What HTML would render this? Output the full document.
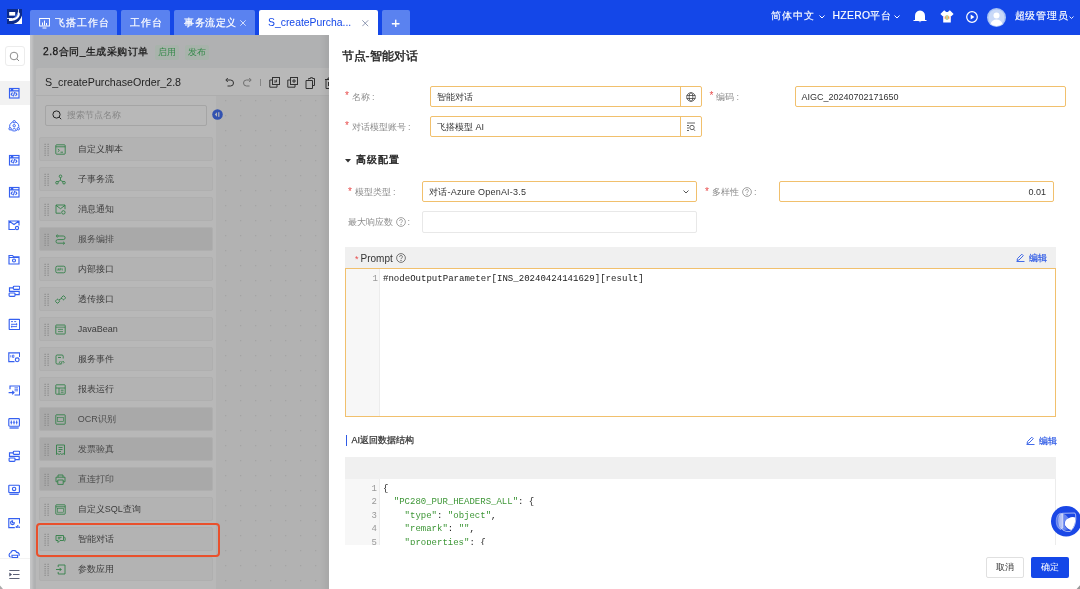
<!DOCTYPE html>
<html><head><meta charset="utf-8">
<style>
*{box-sizing:border-box;margin:0;padding:0}
html,body{width:1080px;height:589px;overflow:hidden;background:#fff;font-family:"Liberation Sans",sans-serif;color:#333}
.abs{position:absolute}
#hdr{will-change:transform;position:absolute;left:0;top:0;width:1080px;height:35px;background:#1447e8}
.tab{position:absolute;top:10px;height:25px;background:#5a82f0;border-radius:2px 2px 0 0;color:#fff;font-size:10.4px;letter-spacing:0.6px;line-height:25px;white-space:nowrap;-webkit-text-stroke:0.2px #fff}
.tab.act{-webkit-text-stroke:0}
.tab.act{background:#fff;color:#1447e8}
.hr-t{position:absolute;top:0;height:35px;line-height:32px;color:#fff;font-size:10.4px;white-space:nowrap;-webkit-text-stroke:0.15px #fff}
#side{will-change:transform;position:absolute;left:0;top:35px;width:30px;height:554px;background:#fff}
#page{will-change:transform;position:absolute;left:30px;top:35px;width:1050px;height:554px;background:#f4f5f7;overflow:hidden}
#mask{position:absolute;left:30px;top:35px;width:1050px;height:554px;background:rgba(0,0,0,0.28)}
#drawer{will-change:transform;position:absolute;left:329px;top:35px;width:751px;height:554px;background:#fff;overflow:hidden}
.lbl{position:absolute;font-size:9px;color:#8c8c8c;white-space:nowrap;line-height:12px}
.lbl b{color:#e84b4b;font-weight:normal;margin-right:3px;font-size:10px;position:relative;top:-0.5px}
.inp{position:absolute;border:1px solid #f1c06d;border-radius:2px;background:#fff;font-size:9px;color:#333;padding-left:6px;padding-top:1px;white-space:nowrap}
.mono{font-family:"Liberation Mono",monospace}
</style></head><body>
<div id="page">
<div class="abs" style="left:13px;top:10px;font-size:10.2px;letter-spacing:0.5px;-webkit-text-stroke:0.25px #222;color:#222;line-height:14px;white-space:nowrap">2.8合同_生成采购订单</div>
<div class="abs" style="left:125px;top:9.5px;width:23.5px;height:15.5px;background:#e9f8ed;border-radius:2px;color:#4cbf6a;font-size:9px;line-height:15.5px;text-align:center">启用</div>
<div class="abs" style="left:155px;top:9.5px;width:23.5px;height:15.5px;background:#e9f8ed;border-radius:2px;color:#4cbf6a;font-size:9px;line-height:15.5px;text-align:center">发布</div>
<div id="card" class="abs" style="left:5.5px;top:33px;width:1100px;height:600px;background:#fff;border-radius:3px">
<div class="abs" style="left:0;top:0;width:1100px;height:27.5px;border-bottom:1px solid #f0f0f0"></div>
<div class="abs" style="left:9.5px;top:7px;font-size:10.7px;color:#333;line-height:14px;white-space:nowrap">S_createPurchaseOrder_2.8</div>
<svg class="abs" style="left:188px;top:9px" width="11" height="10" viewBox="0 0 11 10" fill="none" stroke="#444" stroke-width="1"><path d="M2.5 3H6.5A3 3 0 0 1 6.5 9H3.5M3.8 1L1.8 3L3.8 5"/></svg>
<svg class="abs" style="left:206px;top:9px" width="11" height="10" viewBox="0 0 11 10" fill="none" stroke="#999" stroke-width="1"><path d="M8.5 3H4.5A3 3 0 0 0 4.5 9H7.5M7.2 1L9.2 3L7.2 5"/></svg>
<div class="abs" style="left:224.5px;top:11px;width:1px;height:7px;background:#bbb"></div>
<svg class="abs" style="left:233px;top:9px" width="11" height="11" viewBox="0 0 11 11" fill="none" stroke="#444" stroke-width="1"><rect x="3.5" y="0.5" width="7" height="7"/><path d="M3 3H0.8V10.2H8V8"/><path d="M5.5 3l2 2M7.5 2.5v2.5h-2.5" stroke-width="0.8"/></svg>
<svg class="abs" style="left:251.5px;top:9px" width="11" height="11" viewBox="0 0 11 11" fill="none" stroke="#444" stroke-width="1"><rect x="3.5" y="0.5" width="7" height="7"/><path d="M3 3H0.8V10.2H8V8M7 2v4M5 4h4"/></svg>
<svg class="abs" style="left:269.5px;top:8.5px" width="11" height="12" viewBox="0 0 11 12" fill="none" stroke="#444" stroke-width="1"><path d="M3.5 2.5V1.5h2V0.7h2v0.8h2v7h-2"/><path d="M1 3.5h6.5v8H1z"/></svg>
<svg class="abs" style="left:288.5px;top:8.5px" width="11" height="12" viewBox="0 0 11 12" fill="none" stroke="#444" stroke-width="1"><path d="M1 2.5h9M4 2.5V1h3v1.5M2 2.5v9h7v-9M4.5 5v4M6.5 5v4"/></svg>
<div class="abs" style="left:0;top:27.5px;width:181px;height:600px;background:#fff;border-right:1px solid #f7f7f7"></div>
<div class="abs" style="left:181px;top:27.5px;width:919px;height:600px;background:#f7f7f7;background-image:radial-gradient(circle,#d8d8d8 0.8px,transparent 1px);background-size:15px 15px;background-position:1.2px -2.8px"></div>
<div class="abs" style="left:9.7px;top:37px;width:162px;height:21px;border:1px solid #e5e5e5;border-radius:2px;background:#fff"></div>
<svg class="abs" style="left:16px;top:42px" width="10" height="10" viewBox="0 0 10 10" fill="none" stroke="#333" stroke-width="1"><circle cx="4.5" cy="4.5" r="3.6"/><path d="M7.2 7.2L9.2 9.2"/></svg>
<div class="abs" style="left:31px;top:41px;font-size:9px;color:#bbb;line-height:13px;white-space:nowrap">搜索节点名称</div>
<svg class="abs" style="left:176px;top:40.5px" width="11" height="11" viewBox="0 0 11 11"><circle cx="5.5" cy="5.5" r="5.3" fill="#4672f5"/><path d="M5 3.2L2.8 5.5L5 7.8Z" fill="#fff"/><rect x="6.2" y="3.2" width="1.2" height="4.6" fill="#fff"/></svg>
<div class="abs" style="left:3.7px;top:69.1px;width:173.5px;height:23.5px;background:#f8f8f8;border:1px solid #f3f3f3;border-radius:2px"><svg class="abs" style="left:4px;top:5px" width="5" height="13" viewBox="0 0 5 13" fill="#a8a8a8"><rect x="0.6" y="0.8" width="1" height="1"/><rect x="3.6" y="0.8" width="1" height="1"/><rect x="0.6" y="3" width="1" height="1"/><rect x="3.6" y="3" width="1" height="1"/><rect x="0.6" y="5.2" width="1" height="1"/><rect x="3.6" y="5.2" width="1" height="1"/><rect x="0.6" y="7.4" width="1" height="1"/><rect x="3.6" y="7.4" width="1" height="1"/><rect x="0.6" y="9.6" width="1" height="1"/><rect x="3.6" y="9.6" width="1" height="1"/><rect x="0.6" y="11.8" width="1" height="1"/><rect x="3.6" y="11.8" width="1" height="1"/></svg><svg class="abs" style="left:15px;top:5.5px" width="11" height="11" viewBox="0 0 11 11" fill="none" stroke="#3cae5c" stroke-width="0.85"><rect x="0.8" y="0.8" width="9.4" height="9.4" rx="0.8"/><path d="M0.8 2.8h9.4M2.8 5l1.6 1.4L2.8 7.8M5.5 8.2h2.5"/></svg><div class="abs" style="left:37.5px;top:5px;font-size:9px;color:#555;line-height:13px;white-space:nowrap">自定义脚本</div></div>
<div class="abs" style="left:3.7px;top:99.1px;width:173.5px;height:23.5px;background:#f8f8f8;border:1px solid #f3f3f3;border-radius:2px"><svg class="abs" style="left:4px;top:5px" width="5" height="13" viewBox="0 0 5 13" fill="#a8a8a8"><rect x="0.6" y="0.8" width="1" height="1"/><rect x="3.6" y="0.8" width="1" height="1"/><rect x="0.6" y="3" width="1" height="1"/><rect x="3.6" y="3" width="1" height="1"/><rect x="0.6" y="5.2" width="1" height="1"/><rect x="3.6" y="5.2" width="1" height="1"/><rect x="0.6" y="7.4" width="1" height="1"/><rect x="3.6" y="7.4" width="1" height="1"/><rect x="0.6" y="9.6" width="1" height="1"/><rect x="3.6" y="9.6" width="1" height="1"/><rect x="0.6" y="11.8" width="1" height="1"/><rect x="3.6" y="11.8" width="1" height="1"/></svg><svg class="abs" style="left:15px;top:5.5px" width="11" height="11" viewBox="0 0 11 11" fill="none" stroke="#3cae5c" stroke-width="0.85"><circle cx="5.5" cy="2.3" r="1.3"/><circle cx="2" cy="8.7" r="1.3"/><circle cx="9" cy="8.7" r="1.3"/><path d="M5.5 3.6v2.8L2.9 7.7M5.5 6.4L8.1 7.7"/></svg><div class="abs" style="left:37.5px;top:5px;font-size:9px;color:#555;line-height:13px;white-space:nowrap">子事务流</div></div>
<div class="abs" style="left:3.7px;top:129.1px;width:173.5px;height:23.5px;background:#f8f8f8;border:1px solid #f3f3f3;border-radius:2px"><svg class="abs" style="left:4px;top:5px" width="5" height="13" viewBox="0 0 5 13" fill="#a8a8a8"><rect x="0.6" y="0.8" width="1" height="1"/><rect x="3.6" y="0.8" width="1" height="1"/><rect x="0.6" y="3" width="1" height="1"/><rect x="3.6" y="3" width="1" height="1"/><rect x="0.6" y="5.2" width="1" height="1"/><rect x="3.6" y="5.2" width="1" height="1"/><rect x="0.6" y="7.4" width="1" height="1"/><rect x="3.6" y="7.4" width="1" height="1"/><rect x="0.6" y="9.6" width="1" height="1"/><rect x="3.6" y="9.6" width="1" height="1"/><rect x="0.6" y="11.8" width="1" height="1"/><rect x="3.6" y="11.8" width="1" height="1"/></svg><svg class="abs" style="left:15px;top:5.5px" width="11" height="11" viewBox="0 0 11 11" fill="none" stroke="#3cae5c" stroke-width="0.85"><path d="M10 5.2V1H1v8.2h4.8M1 1.4l4.5 3.3L10 1.4"/><circle cx="8.4" cy="8.4" r="1.7"/></svg><div class="abs" style="left:37.5px;top:5px;font-size:9px;color:#555;line-height:13px;white-space:nowrap">消息通知</div></div>
<div class="abs" style="left:3.7px;top:159.1px;width:173.5px;height:23.5px;background:#ebebeb;border:1px solid #f3f3f3;border-radius:2px"><svg class="abs" style="left:4px;top:5px" width="5" height="13" viewBox="0 0 5 13" fill="#a8a8a8"><rect x="0.6" y="0.8" width="1" height="1"/><rect x="3.6" y="0.8" width="1" height="1"/><rect x="0.6" y="3" width="1" height="1"/><rect x="3.6" y="3" width="1" height="1"/><rect x="0.6" y="5.2" width="1" height="1"/><rect x="3.6" y="5.2" width="1" height="1"/><rect x="0.6" y="7.4" width="1" height="1"/><rect x="3.6" y="7.4" width="1" height="1"/><rect x="0.6" y="9.6" width="1" height="1"/><rect x="3.6" y="9.6" width="1" height="1"/><rect x="0.6" y="11.8" width="1" height="1"/><rect x="3.6" y="11.8" width="1" height="1"/></svg><svg class="abs" style="left:15px;top:5.5px" width="11" height="11" viewBox="0 0 11 11" fill="none" stroke="#3cae5c" stroke-width="0.85"><circle cx="2.3" cy="2" r="1"/><path d="M3.4 2H8.3A1.8 1.8 0 0 1 8.3 5.6H2.8A1.8 1.8 0 0 0 2.8 9.2H9.6M8.2 7.9L9.6 9.2L8.2 10.5"/></svg><div class="abs" style="left:37.5px;top:5px;font-size:9px;color:#6a6a6a;line-height:13px;white-space:nowrap">服务编排</div></div>
<div class="abs" style="left:3.7px;top:189.1px;width:173.5px;height:23.5px;background:#f8f8f8;border:1px solid #f3f3f3;border-radius:2px"><svg class="abs" style="left:4px;top:5px" width="5" height="13" viewBox="0 0 5 13" fill="#a8a8a8"><rect x="0.6" y="0.8" width="1" height="1"/><rect x="3.6" y="0.8" width="1" height="1"/><rect x="0.6" y="3" width="1" height="1"/><rect x="3.6" y="3" width="1" height="1"/><rect x="0.6" y="5.2" width="1" height="1"/><rect x="3.6" y="5.2" width="1" height="1"/><rect x="0.6" y="7.4" width="1" height="1"/><rect x="3.6" y="7.4" width="1" height="1"/><rect x="0.6" y="9.6" width="1" height="1"/><rect x="3.6" y="9.6" width="1" height="1"/><rect x="0.6" y="11.8" width="1" height="1"/><rect x="3.6" y="11.8" width="1" height="1"/></svg><svg class="abs" style="left:15px;top:5.5px" width="11" height="11" viewBox="0 0 11 11" fill="none" stroke="#3cae5c" stroke-width="0.85"><rect x="0.8" y="2.2" width="9.4" height="6.6" rx="1.5"/><path d="M2.6 6.6L3.3 4.4L4 6.6M2.9 5.8h0.8M4.8 6.6V4.4h0.9a0.6 0.6 0 0 1 0 1.2H4.8M7.3 4.4v2.2" stroke-width="0.6"/></svg><div class="abs" style="left:37.5px;top:5px;font-size:9px;color:#555;line-height:13px;white-space:nowrap">内部接口</div></div>
<div class="abs" style="left:3.7px;top:219.1px;width:173.5px;height:23.5px;background:#f8f8f8;border:1px solid #f3f3f3;border-radius:2px"><svg class="abs" style="left:4px;top:5px" width="5" height="13" viewBox="0 0 5 13" fill="#a8a8a8"><rect x="0.6" y="0.8" width="1" height="1"/><rect x="3.6" y="0.8" width="1" height="1"/><rect x="0.6" y="3" width="1" height="1"/><rect x="3.6" y="3" width="1" height="1"/><rect x="0.6" y="5.2" width="1" height="1"/><rect x="3.6" y="5.2" width="1" height="1"/><rect x="0.6" y="7.4" width="1" height="1"/><rect x="3.6" y="7.4" width="1" height="1"/><rect x="0.6" y="9.6" width="1" height="1"/><rect x="3.6" y="9.6" width="1" height="1"/><rect x="0.6" y="11.8" width="1" height="1"/><rect x="3.6" y="11.8" width="1" height="1"/></svg><svg class="abs" style="left:15px;top:5.5px" width="11" height="11" viewBox="0 0 11 11" fill="none" stroke="#3cae5c" stroke-width="0.85"><rect x="0.9" y="5.6" width="3.2" height="3.2" rx="0.6" transform="rotate(-45 2.5 7.2)"/><rect x="6.9" y="2.2" width="3.2" height="3.2" rx="0.6" transform="rotate(-45 8.5 3.8)"/><path d="M4 5.9L7 4.1"/></svg><div class="abs" style="left:37.5px;top:5px;font-size:9px;color:#555;line-height:13px;white-space:nowrap">透传接口</div></div>
<div class="abs" style="left:3.7px;top:249.1px;width:173.5px;height:23.5px;background:#f8f8f8;border:1px solid #f3f3f3;border-radius:2px"><svg class="abs" style="left:4px;top:5px" width="5" height="13" viewBox="0 0 5 13" fill="#a8a8a8"><rect x="0.6" y="0.8" width="1" height="1"/><rect x="3.6" y="0.8" width="1" height="1"/><rect x="0.6" y="3" width="1" height="1"/><rect x="3.6" y="3" width="1" height="1"/><rect x="0.6" y="5.2" width="1" height="1"/><rect x="3.6" y="5.2" width="1" height="1"/><rect x="0.6" y="7.4" width="1" height="1"/><rect x="3.6" y="7.4" width="1" height="1"/><rect x="0.6" y="9.6" width="1" height="1"/><rect x="3.6" y="9.6" width="1" height="1"/><rect x="0.6" y="11.8" width="1" height="1"/><rect x="3.6" y="11.8" width="1" height="1"/></svg><svg class="abs" style="left:15px;top:5.5px" width="11" height="11" viewBox="0 0 11 11" fill="none" stroke="#3cae5c" stroke-width="0.85"><rect x="0.8" y="1" width="9.4" height="9" rx="0.6"/><path d="M0.8 3.2h9.4M3 5.4h5M3 7.6h5" stroke-width="0.7"/></svg><div class="abs" style="left:37.5px;top:5px;font-size:9px;color:#555;line-height:13px;white-space:nowrap">JavaBean</div></div>
<div class="abs" style="left:3.7px;top:279.1px;width:173.5px;height:23.5px;background:#f8f8f8;border:1px solid #f3f3f3;border-radius:2px"><svg class="abs" style="left:4px;top:5px" width="5" height="13" viewBox="0 0 5 13" fill="#a8a8a8"><rect x="0.6" y="0.8" width="1" height="1"/><rect x="3.6" y="0.8" width="1" height="1"/><rect x="0.6" y="3" width="1" height="1"/><rect x="3.6" y="3" width="1" height="1"/><rect x="0.6" y="5.2" width="1" height="1"/><rect x="3.6" y="5.2" width="1" height="1"/><rect x="0.6" y="7.4" width="1" height="1"/><rect x="3.6" y="7.4" width="1" height="1"/><rect x="0.6" y="9.6" width="1" height="1"/><rect x="3.6" y="9.6" width="1" height="1"/><rect x="0.6" y="11.8" width="1" height="1"/><rect x="3.6" y="11.8" width="1" height="1"/></svg><svg class="abs" style="left:15px;top:5.5px" width="11" height="11" viewBox="0 0 11 11" fill="none" stroke="#3cae5c" stroke-width="0.85"><path d="M6.5 10H2.2A1.2 1.2 0 0 1 1 8.8V2.2A1.2 1.2 0 0 1 2.2 1H7A1.2 1.2 0 0 1 8.2 2.2V4.5"/><path d="M5.3 7.2L4.4 8.3L5.3 9.4M8.2 7.2L9.1 8.3L8.2 9.4M7.2 7L6.4 9.6M3 3.5h3"/></svg><div class="abs" style="left:37.5px;top:5px;font-size:9px;color:#555;line-height:13px;white-space:nowrap">服务事件</div></div>
<div class="abs" style="left:3.7px;top:309.1px;width:173.5px;height:23.5px;background:#f8f8f8;border:1px solid #f3f3f3;border-radius:2px"><svg class="abs" style="left:4px;top:5px" width="5" height="13" viewBox="0 0 5 13" fill="#a8a8a8"><rect x="0.6" y="0.8" width="1" height="1"/><rect x="3.6" y="0.8" width="1" height="1"/><rect x="0.6" y="3" width="1" height="1"/><rect x="3.6" y="3" width="1" height="1"/><rect x="0.6" y="5.2" width="1" height="1"/><rect x="3.6" y="5.2" width="1" height="1"/><rect x="0.6" y="7.4" width="1" height="1"/><rect x="3.6" y="7.4" width="1" height="1"/><rect x="0.6" y="9.6" width="1" height="1"/><rect x="3.6" y="9.6" width="1" height="1"/><rect x="0.6" y="11.8" width="1" height="1"/><rect x="3.6" y="11.8" width="1" height="1"/></svg><svg class="abs" style="left:15px;top:5.5px" width="11" height="11" viewBox="0 0 11 11" fill="none" stroke="#3cae5c" stroke-width="0.85"><rect x="0.8" y="0.8" width="9.4" height="9.4" rx="0.6"/><path d="M0.8 4h9.4M4 4v6.2M5.8 6.2h2.8M5.8 8.2h2.8"/></svg><div class="abs" style="left:37.5px;top:5px;font-size:9px;color:#555;line-height:13px;white-space:nowrap">报表运行</div></div>
<div class="abs" style="left:3.7px;top:339.1px;width:173.5px;height:23.5px;background:#ebebeb;border:1px solid #f3f3f3;border-radius:2px"><svg class="abs" style="left:4px;top:5px" width="5" height="13" viewBox="0 0 5 13" fill="#a8a8a8"><rect x="0.6" y="0.8" width="1" height="1"/><rect x="3.6" y="0.8" width="1" height="1"/><rect x="0.6" y="3" width="1" height="1"/><rect x="3.6" y="3" width="1" height="1"/><rect x="0.6" y="5.2" width="1" height="1"/><rect x="3.6" y="5.2" width="1" height="1"/><rect x="0.6" y="7.4" width="1" height="1"/><rect x="3.6" y="7.4" width="1" height="1"/><rect x="0.6" y="9.6" width="1" height="1"/><rect x="3.6" y="9.6" width="1" height="1"/><rect x="0.6" y="11.8" width="1" height="1"/><rect x="3.6" y="11.8" width="1" height="1"/></svg><svg class="abs" style="left:15px;top:5.5px" width="11" height="11" viewBox="0 0 11 11" fill="none" stroke="#3cae5c" stroke-width="0.85"><rect x="0.8" y="0.8" width="9.4" height="9.4" rx="0.6"/><rect x="2.5" y="3.5" width="6" height="4" stroke-width="0.6"/></svg><div class="abs" style="left:37.5px;top:5px;font-size:9px;color:#6a6a6a;line-height:13px;white-space:nowrap">OCR识别</div></div>
<div class="abs" style="left:3.7px;top:369.1px;width:173.5px;height:23.5px;background:#ebebeb;border:1px solid #f3f3f3;border-radius:2px"><svg class="abs" style="left:4px;top:5px" width="5" height="13" viewBox="0 0 5 13" fill="#a8a8a8"><rect x="0.6" y="0.8" width="1" height="1"/><rect x="3.6" y="0.8" width="1" height="1"/><rect x="0.6" y="3" width="1" height="1"/><rect x="3.6" y="3" width="1" height="1"/><rect x="0.6" y="5.2" width="1" height="1"/><rect x="3.6" y="5.2" width="1" height="1"/><rect x="0.6" y="7.4" width="1" height="1"/><rect x="3.6" y="7.4" width="1" height="1"/><rect x="0.6" y="9.6" width="1" height="1"/><rect x="3.6" y="9.6" width="1" height="1"/><rect x="0.6" y="11.8" width="1" height="1"/><rect x="3.6" y="11.8" width="1" height="1"/></svg><svg class="abs" style="left:15px;top:5.5px" width="11" height="11" viewBox="0 0 11 11" fill="none" stroke="#3cae5c" stroke-width="0.85"><path d="M1.5 1h8v9.5L8.2 9.6L6.9 10.5L5.5 9.6L4.1 10.5L2.8 9.6L1.5 10.5Z"/><path d="M3.5 3.5h4M3.5 5.5h4M3.5 7.5h2.5"/></svg><div class="abs" style="left:37.5px;top:5px;font-size:9px;color:#6a6a6a;line-height:13px;white-space:nowrap">发票验真</div></div>
<div class="abs" style="left:3.7px;top:399.1px;width:173.5px;height:23.5px;background:#ebebeb;border:1px solid #f3f3f3;border-radius:2px"><svg class="abs" style="left:4px;top:5px" width="5" height="13" viewBox="0 0 5 13" fill="#a8a8a8"><rect x="0.6" y="0.8" width="1" height="1"/><rect x="3.6" y="0.8" width="1" height="1"/><rect x="0.6" y="3" width="1" height="1"/><rect x="3.6" y="3" width="1" height="1"/><rect x="0.6" y="5.2" width="1" height="1"/><rect x="3.6" y="5.2" width="1" height="1"/><rect x="0.6" y="7.4" width="1" height="1"/><rect x="3.6" y="7.4" width="1" height="1"/><rect x="0.6" y="9.6" width="1" height="1"/><rect x="3.6" y="9.6" width="1" height="1"/><rect x="0.6" y="11.8" width="1" height="1"/><rect x="3.6" y="11.8" width="1" height="1"/></svg><svg class="abs" style="left:15px;top:5.5px" width="11" height="11" viewBox="0 0 11 11" fill="none" stroke="#3cae5c" stroke-width="0.85"><path d="M3 3.2V1h5v2.2M1 3.2h9v4.6H8.2M2.8 7.8H1V3.2M2.8 6h5.4v4.4H2.8z"/></svg><div class="abs" style="left:37.5px;top:5px;font-size:9px;color:#6a6a6a;line-height:13px;white-space:nowrap">直连打印</div></div>
<div class="abs" style="left:3.7px;top:429.1px;width:173.5px;height:23.5px;background:#f8f8f8;border:1px solid #f3f3f3;border-radius:2px"><svg class="abs" style="left:4px;top:5px" width="5" height="13" viewBox="0 0 5 13" fill="#a8a8a8"><rect x="0.6" y="0.8" width="1" height="1"/><rect x="3.6" y="0.8" width="1" height="1"/><rect x="0.6" y="3" width="1" height="1"/><rect x="3.6" y="3" width="1" height="1"/><rect x="0.6" y="5.2" width="1" height="1"/><rect x="3.6" y="5.2" width="1" height="1"/><rect x="0.6" y="7.4" width="1" height="1"/><rect x="3.6" y="7.4" width="1" height="1"/><rect x="0.6" y="9.6" width="1" height="1"/><rect x="3.6" y="9.6" width="1" height="1"/><rect x="0.6" y="11.8" width="1" height="1"/><rect x="3.6" y="11.8" width="1" height="1"/></svg><svg class="abs" style="left:15px;top:5.5px" width="11" height="11" viewBox="0 0 11 11" fill="none" stroke="#3cae5c" stroke-width="0.85"><rect x="0.8" y="0.8" width="9.4" height="9.4" rx="0.6"/><path d="M0.8 2.8h9.4"/><rect x="2.4" y="4.6" width="6.2" height="3.6" stroke-width="0.6"/></svg><div class="abs" style="left:37.5px;top:5px;font-size:9px;color:#555;line-height:13px;white-space:nowrap">自定义SQL查询</div></div>
<div class="abs" style="left:3.7px;top:459.1px;width:173.5px;height:23.5px;background:#f8f8f8;border:1px solid #f3f3f3;border-radius:2px"><svg class="abs" style="left:4px;top:5px" width="5" height="13" viewBox="0 0 5 13" fill="#a8a8a8"><rect x="0.6" y="0.8" width="1" height="1"/><rect x="3.6" y="0.8" width="1" height="1"/><rect x="0.6" y="3" width="1" height="1"/><rect x="3.6" y="3" width="1" height="1"/><rect x="0.6" y="5.2" width="1" height="1"/><rect x="3.6" y="5.2" width="1" height="1"/><rect x="0.6" y="7.4" width="1" height="1"/><rect x="3.6" y="7.4" width="1" height="1"/><rect x="0.6" y="9.6" width="1" height="1"/><rect x="3.6" y="9.6" width="1" height="1"/><rect x="0.6" y="11.8" width="1" height="1"/><rect x="3.6" y="11.8" width="1" height="1"/></svg><svg class="abs" style="left:15px;top:5.5px" width="11" height="11" viewBox="0 0 11 11" fill="none" stroke="#3cae5c" stroke-width="0.85"><path d="M1 1.5h7.5v5H5L3 8.5V6.5H1zM2.8 3.3h3.8M2.8 4.8h2.5M9.6 2.8q1.4 2.2 0 4.6"/></svg><div class="abs" style="left:37.5px;top:5px;font-size:9px;color:#555;line-height:13px;white-space:nowrap">智能对话</div></div>
<div class="abs" style="left:3.7px;top:489.1px;width:173.5px;height:23.5px;background:#f8f8f8;border:1px solid #f3f3f3;border-radius:2px"><svg class="abs" style="left:4px;top:5px" width="5" height="13" viewBox="0 0 5 13" fill="#a8a8a8"><rect x="0.6" y="0.8" width="1" height="1"/><rect x="3.6" y="0.8" width="1" height="1"/><rect x="0.6" y="3" width="1" height="1"/><rect x="3.6" y="3" width="1" height="1"/><rect x="0.6" y="5.2" width="1" height="1"/><rect x="3.6" y="5.2" width="1" height="1"/><rect x="0.6" y="7.4" width="1" height="1"/><rect x="3.6" y="7.4" width="1" height="1"/><rect x="0.6" y="9.6" width="1" height="1"/><rect x="3.6" y="9.6" width="1" height="1"/><rect x="0.6" y="11.8" width="1" height="1"/><rect x="3.6" y="11.8" width="1" height="1"/></svg><svg class="abs" style="left:15px;top:5.5px" width="11" height="11" viewBox="0 0 11 11" fill="none" stroke="#3cae5c" stroke-width="0.85"><path d="M3.2 3V1h6.8v9H3.2V8M1 5.5h5.2M4.6 3.9L6.2 5.5L4.6 7.1"/></svg><div class="abs" style="left:37.5px;top:5px;font-size:9px;color:#555;line-height:13px;white-space:nowrap">参数应用</div></div>
</div>
</div>
<div id="mask"></div>
<div class="abs" style="left:30px;top:35px;width:4px;height:554px;background:linear-gradient(90deg,rgba(255,255,255,0.28),rgba(255,255,255,0.2) 50%,rgba(255,255,255,0))"></div>
<div class="abs" style="left:35.5px;top:523px;width:184.5px;height:33.5px;border:2px solid #e9502c;border-radius:4px"></div>
<div class="abs" style="left:320px;top:35px;width:9px;height:554px;background:linear-gradient(90deg,rgba(0,0,0,0),rgba(0,0,0,0.06))"></div>
<div id="hdr">
<svg class="abs" style="left:7px;top:9px" width="15" height="15" viewBox="0 0 15 15">
<rect width="15" height="15" fill="#0b2a8a"/>
<path d="M15 6.5 L15 15 L6.5 15 Q13 13 15 6.5Z" fill="#fff"/>
<path d="M11 0.3 L11.8 0.3 L11.8 3.2 Q13.2 4 12.8 6 Q11.5 11.2 4.5 12 L2 12 L2 9.2 L5.5 9.2 Q9.6 8.6 10.4 5 L10.6 3.5 L11 3.2Z" fill="#fff"/>
<rect x="2.2" y="3" width="6" height="3.6" fill="#fff"/>
<rect x="0" y="9.1" width="5" height="0.8" fill="#fff"/>
<path d="M10.6 4.2 Q11 7.2 7.6 9 Q7.8 6 10.6 4.2Z" fill="#3d6ff0"/>
</svg>
<div class="tab" style="left:30px;width:87px">
<svg class="abs" style="left:9px;top:8px" width="11" height="11" viewBox="0 0 11 11" fill="none" stroke="#fff" stroke-width="1"><rect x="0.6" y="0.5" width="10" height="7.5"/><path d="M3.5 7.5V4.5M5.5 7.5V2.5M7.5 7.5V5M3.5 10h4"/></svg>
<span class="abs" style="left:25px;letter-spacing:1px">飞搭工作台</span></div>
<div class="tab" style="left:121px;width:49px"><span class="abs" style="left:9px;letter-spacing:1px">工作台</span></div>
<div class="tab" style="left:174px;width:81px"><span class="abs" style="left:10px">事务流定义</span><svg class="abs" style="left:66px;top:9.6px" width="6" height="6" viewBox="0 0 6 6" stroke="#fff" stroke-opacity="0.9" stroke-width="0.8"><path d="M0.3 0.3L5.7 5.7M5.7 0.3L0.3 5.7"/></svg></div>
<div class="tab act" style="left:259px;width:119px"><span class="abs" style="left:9px;letter-spacing:0">S_createPurcha...</span><svg class="abs" style="left:103px;top:10px" width="6.5" height="6.5" viewBox="0 0 6.5 6.5" stroke="#6b7899" stroke-width="0.75"><path d="M0.3 0.3L6.2 6.2M6.2 0.3L0.3 6.2"/></svg></div>
<div class="tab" style="left:382px;width:28px;text-align:center;font-size:15px">+</div>
<div class="hr-t" style="left:771px;letter-spacing:0.85px">简体中文</div>
<svg class="abs" style="left:819px;top:15px" width="6" height="4" viewBox="0 0 6 4" fill="none" stroke="#fff" stroke-width="1"><path d="M0.5 0.5L3 3L5.5 0.5"/></svg>
<div class="hr-t" style="left:832.5px;letter-spacing:0.3px">HZERO平台</div>
<svg class="abs" style="left:894px;top:15px" width="6" height="4" viewBox="0 0 6 4" fill="none" stroke="#fff" stroke-width="1"><path d="M0.5 0.5L3 3L5.5 0.5"/></svg>
<svg class="abs" style="left:913px;top:9px" width="14" height="14" viewBox="0 0 14 14"><path d="M2 11 L2 7 Q2 2 7 1.5 Q12 2 12 7 L12 11 L13.5 11 L13.5 12 L0.5 12 L0.5 11 Z" fill="#fff"/><path d="M5.5 12.5 Q7 14 8.5 12.5Z" fill="#fff"/></svg>
<svg class="abs" style="left:940px;top:10px" width="14" height="13" viewBox="0 0 14 13"><path d="M4.2 0.3L5.6 1.4Q7 2.4 8.4 1.4L9.8 0.3L13.6 4L11.3 6.2L10.8 5.9V12.6H3.2V5.9L2.7 6.2L0.4 4Z" fill="#fff"/><rect x="3.2" y="6.6" width="7.6" height="2.2" fill="#fbd3d3"/><ellipse cx="7" cy="7.6" rx="2" ry="2.3" fill="#f2b04a"/><rect x="6.3" y="5.3" width="1.4" height="4.6" fill="#a8e0c8"/></svg>
<svg class="abs" style="left:966px;top:11px" width="12" height="12" viewBox="0 0 12 12" fill="none"><circle cx="6" cy="6" r="5.3" stroke="#fff" stroke-width="1.2"/><path d="M4.7 3.6 L8.4 6 L4.7 8.4Z" fill="#fff"/></svg>
<svg class="abs" style="left:987px;top:8px" width="19" height="19" viewBox="0 0 19 19"><circle cx="9.5" cy="9.5" r="9.5" fill="#a9c3f5"/><circle cx="9.5" cy="9.5" r="8" fill="#c9d9f8"/><circle cx="9.5" cy="7.5" r="3" fill="#fff"/><path d="M3.5 16 Q5 11.5 9.5 11.5 Q14 11.5 15.5 16 Q12.5 18 9.5 18 Q6.5 18 3.5 16Z" fill="#fff"/></svg>
<div class="hr-t" style="left:1014.5px;letter-spacing:0.75px">超级管理员</div>
<svg class="abs" style="left:1069px;top:16px" width="5" height="3" viewBox="0 0 5 3" fill="none" stroke="#fff" stroke-width="0.9"><path d="M0.5 0.5L2.5 2.5L4.5 0.5"/></svg>
</div>
<div id="side">
<div class="abs" style="left:4.5px;top:11px;width:20px;height:20px;border:1px solid #ececec;border-radius:3px"></div>
<svg class="abs" style="left:9px;top:15.5px" width="11" height="11" viewBox="0 0 11 11" fill="none" stroke="#8c8c8c" stroke-width="1"><circle cx="5" cy="5" r="3.8"/><path d="M7.8 7.8L10 10"/></svg>
<div class="abs" style="left:0;top:46px;width:30px;height:24px;background:#f2f2f2"></div>
<svg class="abs" style="left:8px;top:52.0px" width="12" height="12" viewBox="0 0 12 12" fill="none" stroke="#3560f0" stroke-width="1.15"><rect x="1.5" y="1.5" width="9.5" height="9.5"/><path d="M1.5 3.8h9.5M2.8 2.6h2.5M4.5 5.5L3.2 7.3L4.5 9M7.5 5.5L8.8 7.3L7.5 9M6.6 5.2L5.4 9.4"/></svg>
<svg class="abs" style="left:8px;top:85.0px" width="12" height="12" viewBox="0 0 12 12" fill="none" stroke="#3560f0" stroke-width="1.15"><circle cx="6.2" cy="6.4" r="4.6" stroke-width="0.95"/><circle cx="6.2" cy="1.7" r="1.2" fill="#fff" stroke-width="0.95"/><circle cx="2.1" cy="8.8" r="1.2" fill="#fff" stroke-width="0.95"/><circle cx="10.3" cy="8.8" r="1.2" fill="#fff" stroke-width="0.95"/><circle cx="6.2" cy="5.7" r="1.2" stroke-width="0.95"/><path d="M4.4 9.5Q6.2 7.3 8 9.5" stroke-width="0.95"/></svg>
<svg class="abs" style="left:8px;top:119.0px" width="12" height="12" viewBox="0 0 12 12" fill="none" stroke="#3560f0" stroke-width="1.15"><rect x="1.5" y="1.5" width="9.5" height="9.5"/><path d="M1.5 3.8h9.5M2.8 2.6h2.5M4.5 5.5L3.2 7.3L4.5 9M7.5 5.5L8.8 7.3L7.5 9M6.6 5.2L5.4 9.4"/></svg>
<svg class="abs" style="left:8px;top:151.0px" width="12" height="12" viewBox="0 0 12 12" fill="none" stroke="#3560f0" stroke-width="1.15"><rect x="1.5" y="1.5" width="9.5" height="9.5"/><path d="M1.5 3.8h9.5M2.8 2.6h2.5M4.5 5.5L3.2 7.3L4.5 9M7.5 5.5L8.8 7.3L7.5 9M6.6 5.2L5.4 9.4"/></svg>
<svg class="abs" style="left:8px;top:184.0px" width="12" height="12" viewBox="0 0 12 12" fill="none" stroke="#3560f0" stroke-width="1.15"><path d="M1 2h10v4.5M7 10.5H1V2l5 3.5L11 2"/><circle cx="9" cy="9" r="1.6"/></svg>
<svg class="abs" style="left:8px;top:218.0px" width="12" height="12" viewBox="0 0 12 12" fill="none" stroke="#3560f0" stroke-width="1.15"><path d="M1 2.5h3.5l1 1.2H11v7.3H1z M1 4.5h10"/><circle cx="6" cy="7.5" r="1.5"/></svg>
<svg class="abs" style="left:8px;top:250.0px" width="12" height="12" viewBox="0 0 12 12" fill="none" stroke="#3560f0" stroke-width="1.15"><rect x="5.3" y="1.2" width="6.4" height="3.2" rx="0.8"/><path d="M5.3 2.8H1.5V6.3H11.2V9.6H7"/><rect x="1.1" y="8" width="5.9" height="3.4" rx="0.8"/></svg>
<svg class="abs" style="left:8px;top:283.0px" width="12" height="12" viewBox="0 0 12 12" fill="none" stroke="#3560f0" stroke-width="1.15"><rect x="1.2" y="1.3" width="10.4" height="10.3" rx="0.5"/><path d="M3 3.6h2M6.2 3.6h2M3 6.3h6M3 8.6h6" stroke-width="0.9"/><path d="M8 5.3L9.2 6.3L8 7.3M4.2 7.6L3 8.6L4.2 9.6" stroke-width="0.8"/></svg>
<svg class="abs" style="left:8px;top:316.0px" width="12" height="12" viewBox="0 0 12 12" fill="none" stroke="#3560f0" stroke-width="1.15"><path d="M11.6 6V1.8H0.8V10.6H6.5"/><path d="M2.8 4.2v2.2M4.5 4.2h1.4v2.2H4.5z" stroke-width="0.8"/><circle cx="9.2" cy="8.8" r="1.9"/></svg>
<svg class="abs" style="left:8px;top:349.0px" width="12" height="12" viewBox="0 0 12 12" fill="none" stroke="#3560f0" stroke-width="1.15"><path d="M2 5.2V2H11.6V11H6.5"/><path d="M6.5 3.8h3.5M6.5 5.3h3.5M6.5 6.8h3.5" stroke-width="0.8"/><path d="M0.6 8.6H6M4.2 6.8L6 8.6L4.2 10.4"/></svg>
<svg class="abs" style="left:8px;top:382.0px" width="12" height="12" viewBox="0 0 12 12" fill="none" stroke="#3560f0" stroke-width="1.15"><rect x="0.8" y="1.6" width="10.6" height="7.6" rx="0.8"/><path d="M1.5 11h9.2" stroke-width="1.3"/><path d="M3.3 3.3v4.2M6 3.3v4.2M8.7 3.3v4.2" stroke-width="0.7"/><path d="M3.3 4.2L4 5.4L3.3 6.6L2.6 5.4ZM6 4.2L6.7 5.4L6 6.6L5.3 5.4ZM8.7 4.2L9.4 5.4L8.7 6.6L8 5.4Z" fill="#3560f0" stroke-width="0.4"/></svg>
<svg class="abs" style="left:8px;top:415.0px" width="12" height="12" viewBox="0 0 12 12" fill="none" stroke="#3560f0" stroke-width="1.15"><rect x="5.3" y="1.2" width="6.4" height="3.2" rx="0.8"/><path d="M5.3 2.8H1.5V6.3H11.2V9.6H7"/><rect x="1.1" y="8" width="5.9" height="3.4" rx="0.8"/></svg>
<svg class="abs" style="left:8px;top:448.0px" width="12" height="12" viewBox="0 0 12 12" fill="none" stroke="#3560f0" stroke-width="1.15"><rect x="0.8" y="2.2" width="10.6" height="7.4" rx="0.5"/><path d="M1.5 11.3h9.2"/><circle cx="6.1" cy="5.9" r="1.7"/></svg>
<svg class="abs" style="left:8px;top:482.0px" width="12" height="12" viewBox="0 0 12 12" fill="none" stroke="#3560f0" stroke-width="1.15"><path d="M11.6 6.5V1.6H0.8V10.6H6.8"/><path d="M4.5 3.8A1.9 1.9 0 1 0 6.4 5.7H4.5Z"/><path d="M8.3 11V9M9.8 11V8M11.3 11V9.5"/></svg>
<svg class="abs" style="left:8px;top:514.5px" width="12" height="12" viewBox="0 0 12 12" fill="none" stroke="#3560f0" stroke-width="1.15"><path d="M2.6 7.2A2.3 2.3 0 0 1 2.8 2.8A3 3 0 0 1 8.6 2.4A2.3 2.3 0 0 1 10.9 5.8M4 9.4V5.2H9.6V7.6H4.5M4 9.4H10.9"/></svg>
<div class="abs" style="left:0;top:523px;width:30px;height:40px;background:#fff;border-top:1px solid #f3f3f3"></div>
<svg class="abs" style="left:0;top:550px" width="4" height="4" viewBox="0 0 4 4"><path d="M0 0.5L3 4H0Z" fill="#aaa"/></svg>
<svg class="abs" style="left:9px;top:533px" width="11" height="11" viewBox="0 0 11 11" fill="none" stroke="#4a5068" stroke-width="0.9"><path d="M0.3 2.5h10.2M4 6.5h6.5M0.3 10.5h10.2"/><path d="M0.3 4.6L3 6.5L0.3 8.4Z" fill="#4a5068" stroke="none"/></svg>
</div>
<div id="drawer">
<div class="abs" style="left:12.5px;top:12px;font-size:12.1px;-webkit-text-stroke:0.4px #222;color:#222;line-height:18px;white-space:nowrap">节点-智能对话</div>
<div class="lbl" style="left:16.0px;top:55.8px"><b>*</b>名称<span style="margin-left:2px">:</span></div>
<div class="inp" style="left:101.0px;top:51.0px;width:272.0px;height:21.0px;line-height:19.0px;">智能对话<div class="abs" style="right:0;top:0;width:21.3px;height:100%;border-left:1px solid #f1c06d"></div><svg class="abs" style="right:5px;top:4.8px" width="10" height="10" viewBox="0 0 10 10" fill="none" stroke="#444" stroke-width="0.8"><circle cx="5" cy="5" r="4.3"/><ellipse cx="5" cy="5" rx="1.9" ry="4.3"/><path d="M0.7 3.5h8.6M0.7 6.5h8.6"/></svg></div>
<div class="lbl" style="left:380.5px;top:55.8px"><b>*</b>编码<span style="margin-left:2px">:</span></div>
<div class="inp" style="left:465.5px;top:51.0px;width:271.0px;height:21.0px;line-height:19.0px;">AIGC_20240702171650</div>
<div class="lbl" style="left:16.0px;top:85.8px"><b>*</b>对话模型账号<span style="margin-left:2px">:</span></div>
<div class="inp" style="left:101.0px;top:81.0px;width:272.0px;height:21.0px;line-height:19.0px;">飞搭模型 AI<div class="abs" style="right:0;top:0;width:21.3px;height:100%;border-left:1px solid #f1c06d"></div><svg class="abs" style="right:5.5px;top:5px" width="10" height="10" viewBox="0 0 10 10" fill="none" stroke="#555" stroke-width="0.9"><path d="M1 1h8M1 3.5h2M1 6h2M1 8.5h2"/><circle cx="6" cy="5.5" r="2.2"/><path d="M7.6 7.2L9 8.8"/></svg></div>
<svg class="abs" style="left:15.5px;top:123.5px" width="6" height="4" viewBox="0 0 6 4"><path d="M0 0H6L3 3.5Z" fill="#333"/></svg>
<div class="abs" style="left:27px;top:117px;font-size:10.2px;letter-spacing:0.9px;-webkit-text-stroke:0.4px #222;color:#222;line-height:16px;white-space:nowrap">高级配置</div>
<div class="lbl" style="left:19.0px;top:151.0px"><b>*</b>模型类型<span style="margin-left:2px">:</span></div>
<div class="inp" style="left:93.0px;top:146.0px;width:275.0px;height:21.0px;line-height:19.0px;letter-spacing:0.22px">对话-Azure OpenAI-3.5<svg class="abs" style="right:7px;top:8px" width="6" height="4" viewBox="0 0 6 4" fill="none" stroke="#444" stroke-width="0.9"><path d="M0.5 0.5L3 3L5.5 0.5"/></svg></div>
<div class="lbl" style="left:376.0px;top:151.0px"><b>*</b>多样性<svg width="10" height="10" viewBox="0 0 10 10" style="vertical-align:-1.5px;margin:0 2px 0 3px" fill="none" stroke="#8c8c8c" stroke-width="0.8"><circle cx="5" cy="5" r="4.4"/><path d="M3.6 3.9A1.4 1.4 0 1 1 5.6 5.1Q5 5.4 5 6.1"/><circle cx="5" cy="7.4" r="0.25" fill="#8c8c8c"/></svg>:</div>
<div class="inp" style="left:450.0px;top:146.0px;width:275.0px;height:21.0px;line-height:19.0px;text-align:right;padding-right:7px">0.01</div>
<div class="lbl" style="left:18.5px;top:181.0px">最大响应数<svg width="10" height="10" viewBox="0 0 10 10" style="vertical-align:-1.5px;margin:0 2px 0 3px" fill="none" stroke="#8c8c8c" stroke-width="0.8"><circle cx="5" cy="5" r="4.4"/><path d="M3.6 3.9A1.4 1.4 0 1 1 5.6 5.1Q5 5.4 5 6.1"/><circle cx="5" cy="7.4" r="0.25" fill="#8c8c8c"/></svg>:</div>
<div class="inp" style="left:93.0px;top:176.0px;width:275.0px;height:21.5px;line-height:19.5px;border-color:#e8e8e8"></div>
<div class="abs" style="left:16px;top:212px;width:711px;height:21px;background:#f0f0f0"></div>
<div class="abs" style="left:26px;top:216.7px;font-size:10px;color:#333;line-height:13px;white-space:nowrap"><b style="color:#e84b4b;font-weight:normal;margin-right:2px;font-size:9px">*</b>Prompt<svg width="10" height="10" viewBox="0 0 10 10" style="vertical-align:-1.5px;margin:0 2px 0 3px" fill="none" stroke="#555" stroke-width="0.8"><circle cx="5" cy="5" r="4.4"/><path d="M3.6 3.9A1.4 1.4 0 1 1 5.6 5.1Q5 5.4 5 6.1"/><circle cx="5" cy="7.4" r="0.25" fill="#555"/></svg></div>
<div class="abs" style="left:687px;top:217.3px;width:40px;height:13px;font-size:9px;color:#2f5be6;line-height:13px;white-space:nowrap"><svg width="9" height="9" viewBox="0 0 9 9" fill="none" stroke="#2f5be6" stroke-width="0.9" style="position:absolute;left:0;top:1px"><path d="M1 7.5L1.5 5.5L5.8 1.2L7.3 2.7L3 7L1 7.5ZM0.5 8.5h8"/></svg><span style="position:absolute;left:13px;-webkit-text-stroke:0.2px #2f5be6">编辑</span></div>
<div class="abs" style="left:16px;top:233px;width:711px;height:149px;border:1px solid #f1c06d;background:#fff"><div class="abs" style="left:0;top:0;width:34px;height:100%;background:#f7f7f7;border-right:1px solid #ececec"></div><div class="abs mono" style="left:0;top:4.4px;width:32px;text-align:right;font-size:9px;line-height:13.5px;color:#999">1</div><div class="abs mono" style="left:37px;top:3.2px;font-size:9.05px;line-height:13.5px;color:#222;white-space:pre">#nodeOutputParameter[INS_20240424141629][result]</div></div>
<div class="abs" style="left:16.69999999999999px;top:400px;width:1.6px;height:10.5px;background:#2f5be6"></div>
<div class="abs" style="left:22.399999999999977px;top:399.0px;font-size:9px;-webkit-text-stroke:0.25px #333;color:#333;line-height:13px;white-space:nowrap">AI返回数据结构</div>
<div class="abs" style="left:697px;top:399.5px;width:40px;height:13px;font-size:9px;color:#2f5be6;line-height:13px;white-space:nowrap"><svg width="9" height="9" viewBox="0 0 9 9" fill="none" stroke="#2f5be6" stroke-width="0.9" style="position:absolute;left:0;top:1px"><path d="M1 7.5L1.5 5.5L5.8 1.2L7.3 2.7L3 7L1 7.5ZM0.5 8.5h8"/></svg><span style="position:absolute;left:13px;-webkit-text-stroke:0.2px #2f5be6">编辑</span></div>
<div class="abs" style="left:16px;top:421.8px;width:710.6px;height:21.9px;background:#f0f0f0"></div>
<div class="abs" style="left:16px;top:443.7px;width:710.6px;height:66.3px;border-right:1px solid #ececec;background:#fff;overflow:hidden"><div class="abs" style="left:0;top:0;width:35px;height:100%;background:#f7f7f7;border-right:1px solid #ececec"></div><div class="abs mono" style="left:0;top:4.2px;width:32px;text-align:right;font-size:9px;line-height:13.5px;color:#999;white-space:pre">1
2
3
4
5</div><div class="abs mono" style="left:38px;top:4.2px;font-size:9px;line-height:13.5px;color:#222;white-space:pre">{
  <span style="color:#3d9636">"PC280_PUR_HEADERS_ALL"</span>: {
    <span style="color:#3d9636">"type"</span>: <span style="color:#3d9636">"object"</span>,
    <span style="color:#3d9636">"remark"</span>: <span style="color:#3d9636">""</span>,
    <span style="color:#3d9636">"properties"</span>: {</div></div>
<div class="abs" style="left:657.4px;top:522.2px;width:37.3px;height:20.7px;border:1px solid #e0e0e0;border-radius:2px;background:#fff;font-size:9px;color:#333;line-height:18.7px;text-align:center">取消</div>
<div class="abs" style="left:702.2px;top:522.2px;width:37.8px;height:20.7px;border-radius:2px;background:#1447e8;font-size:9px;color:#fff;line-height:20.7px;text-align:center">确定</div>
<svg class="abs" style="left:721.8px;top:471px" width="31" height="31" viewBox="0 0 31 31"><defs><linearGradient id="fg" x1="0" x2="1"><stop offset="0" stop-color="#fff" stop-opacity="0.25"/><stop offset="1" stop-color="#fff" stop-opacity="0.6"/></linearGradient></defs><circle cx="15.2" cy="15.2" r="15.2" fill="#1a47e6"/><path d="M9.5 7.3Q5.5 8 5.2 15Q5.2 21.5 9.5 23.5L12 22L12 8Z" fill="url(#fg)" stroke="#fff" stroke-opacity="0.55" stroke-width="0.6"/><path d="M11.5 7.3Q7.8 8.5 7.8 15Q7.8 21.5 11.8 24" fill="none" stroke="#fff" stroke-opacity="0.7" stroke-width="0.6"/><path d="M11.5 7.3L23.8 7Q25 7.5 24.8 13Q24.5 21.5 19 25.5Q15 26 11.8 24" fill="none" stroke="#fff" stroke-opacity="0.85" stroke-width="0.7"/><path d="M11.5 7.3Q16 9 17.5 12Q14 13.5 13.2 17Q13.5 21 17 23.5L11.8 24Q8.5 21 8.5 15Q8.5 9 11.5 7.3Z" fill="#fff" fill-opacity="0.35"/><path d="M17.5 12.2Q21.5 10.2 24.3 11.5Q24.8 18.5 20.5 24Q16.5 23.5 13.8 19Q13.2 14 17.5 12.2Z" fill="#fff"/></svg>
<svg class="abs" style="left:747px;top:550px" width="4" height="4" viewBox="0 0 4 4"><path d="M4 0.3V4H0.6Z" fill="#999"/></svg>
</div>
</body></html>
